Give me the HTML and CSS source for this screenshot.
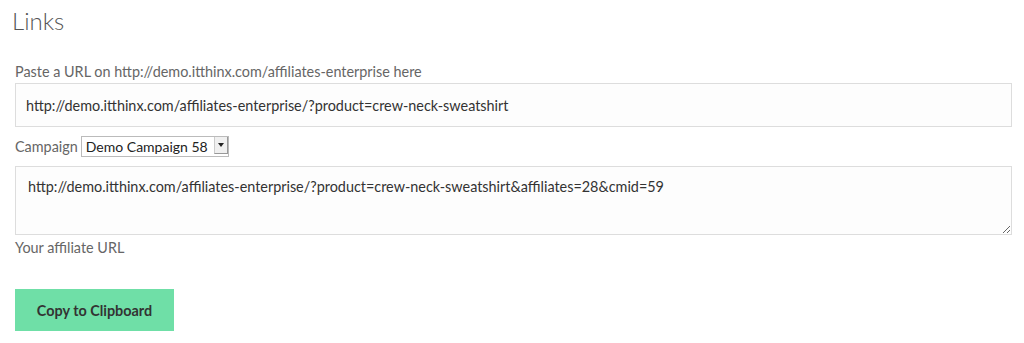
FILE: index.html
```html
<!DOCTYPE html>
<html>
  <head>
    <title>Links</title>
    <meta charset="UTF-8" />
    <link rel="stylesheet" href="styles.css">
  </head>
  <body>
    <div class="wrapper">
      <h2 class="title">Links</h2>
      <form class="links">
        <label class="label" for="url">Paste a URL on http://demo.itthinx.com/affiliates-enterprise here</label>
        <input id="url" class="url" type="text" value="http://demo.itthinx.com/affiliates-enterprise/?product=crew-neck-sweatshirt">
        <div class="campaign">
          <span class="campaign-label">Campaign</span>
          <span class="select">
            <select>
              <option>Demo Campaign 58</option>
            </select>
            <span class="select-arrow"></span>
          </span>
        </div>
        <textarea class="result" readonly>http://demo.itthinx.com/affiliates-enterprise/?product=crew-neck-sweatshirt&amp;affiliates=28&amp;cmid=59</textarea>
        <p class="hint">Your affiliate URL</p>
        <button type="button" class="btn">Copy to Clipboard</button>
      </form>
    </div>
  </body>
</html>
```

FILE: styles.css
```css
body {
  margin: 0;
  background: #fff;
  font-family: Lato, "Open Sans", sans-serif;
  color: #666;
}
.wrapper {
  padding: 6px 12px 0 15px;
}
.title {
  margin: 0 0 0 -3px;
  font-size: 24px;
  font-weight: 300;
  color: #555;
  line-height: 30px;
}
.links {
  display: flex;
  flex-direction: column;
  align-items: flex-start;
  margin-top: 27px;
}
.label {
  font-size: 14.4px;
  line-height: 18px;
  color: #666;
}
.url,
.result {
  box-sizing: border-box;
  width: 997px;
  border: 1px solid #ddd;
  background: #fdfdfd;
  font-family: inherit;
  font-size: 14.4px;
  color: #333;
  outline: none;
}
.url {
  height: 44px;
  margin-top: 2px;
  padding: 0 10px;
}
.campaign {
  display: flex;
  align-items: center;
  gap: 3px;
  margin-top: 9px;
  font-size: 14.4px;
}
.select {
  position: relative;
  display: inline-block;
}
.select select {
  -webkit-appearance: none;
  appearance: none;
  box-sizing: border-box;
  height: 21px;
  width: 148px;
  padding: 0 16px 0 4px;
  border: 1px solid #bbb;
  border-radius: 0;
  background: #fff;
  font-family: inherit;
  font-size: 14px;
  color: #222;
}
.select-arrow {
  position: absolute;
  right: 1px;
  top: 1px;
  width: 14px;
  height: 17px;
  border-left: 1px solid #ccc;
  border-right: 1px solid #999;
  border-bottom: 1px solid #999;
  box-sizing: border-box;
  background: #f0f0f0;
}
.select-arrow::after {
  content: "";
  position: absolute;
  left: 3px;
  top: 6px;
  border-left: 3px solid transparent;
  border-right: 3px solid transparent;
  border-top: 4px solid #222;
}
.result {
  height: 69px;
  margin-top: 9px;
  padding: 11px 12px;
  resize: vertical;
  line-height: 18px;
}
.hint {
  margin: 4px 0 0;
  font-size: 14.4px;
  line-height: 18px;
}
.btn {
  margin-top: 32px;
  width: 159px;
  height: 42px;
  border: 0;
  background: #6fdfa7;
  color: #333;
  font-family: inherit;
  font-size: 14.4px;
  font-weight: 700;
}
```
